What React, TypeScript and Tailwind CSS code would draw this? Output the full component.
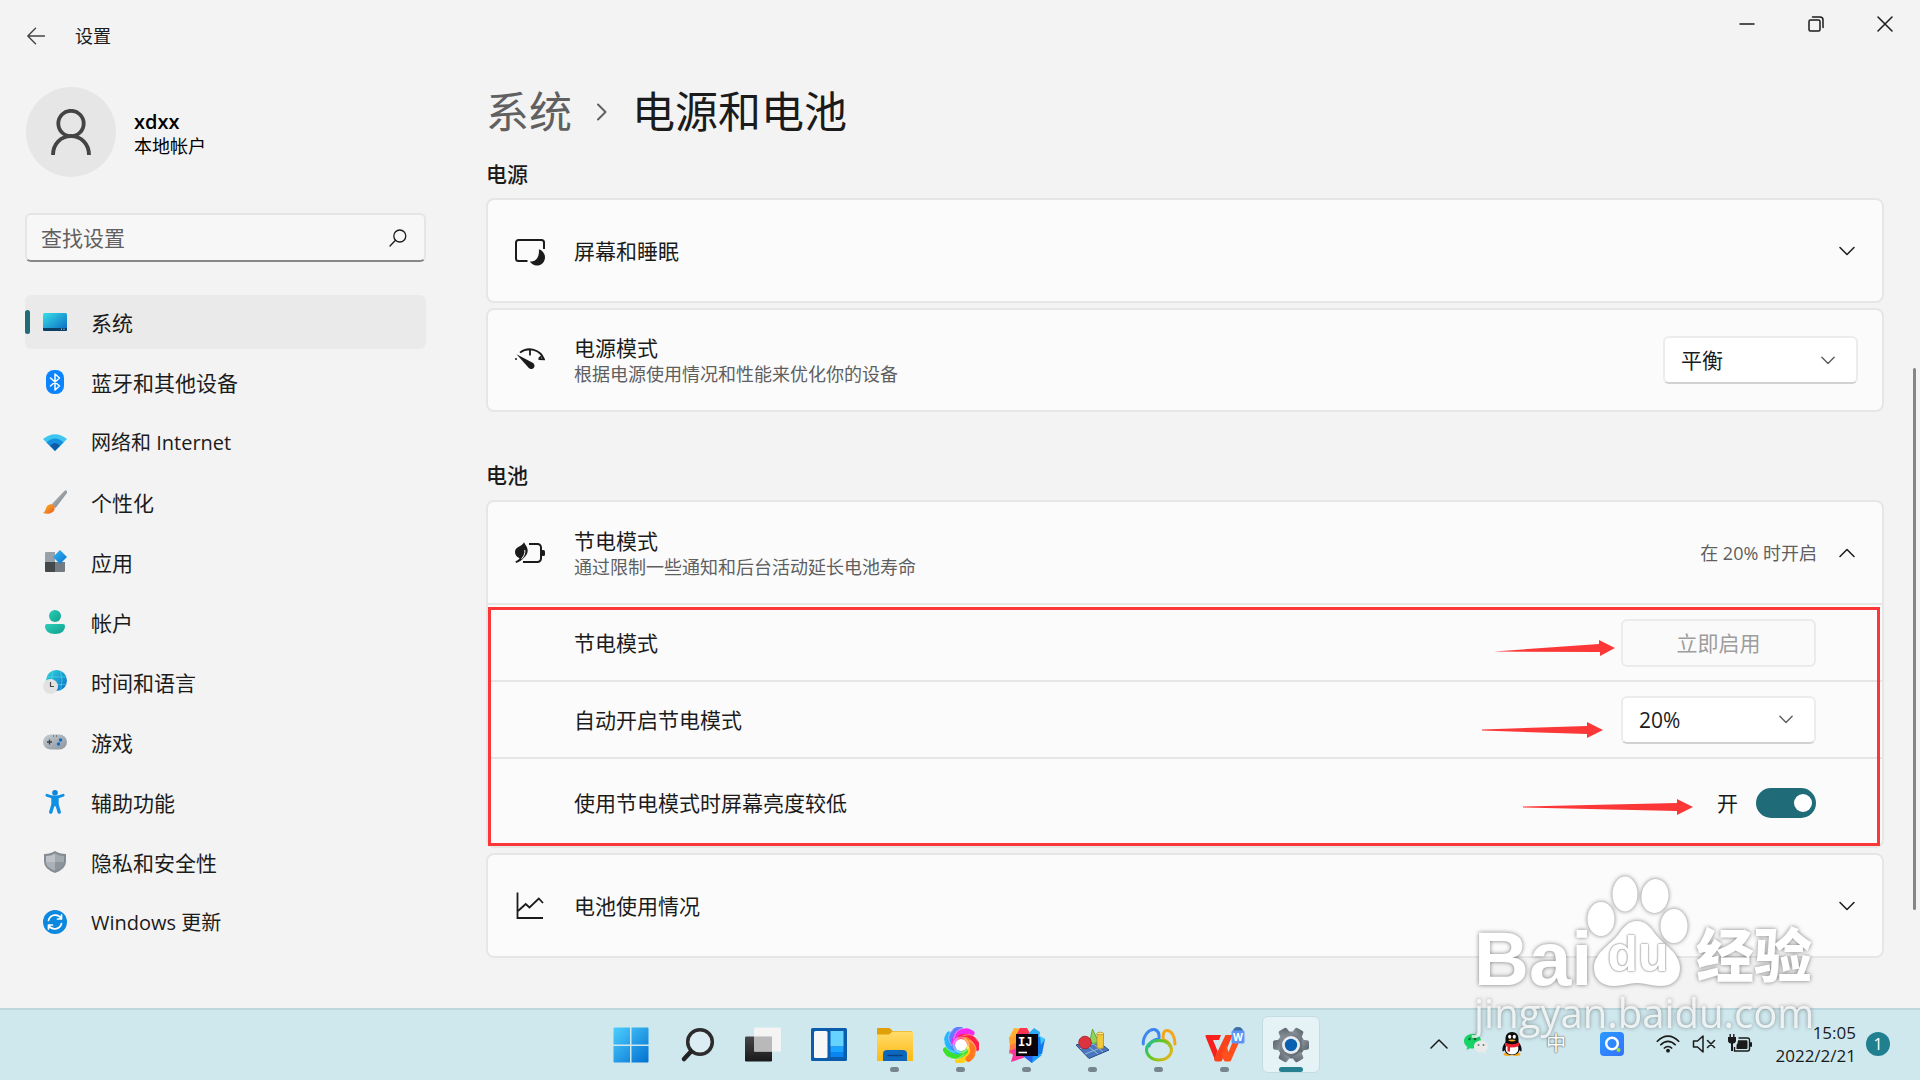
import React, { useState } from "react";

const line = { fill: "none", stroke: "currentColor", strokeLinecap: "round", strokeLinejoin: "round" } as const;

function Chevron({ up = false, small = false }: { up?: boolean; small?: boolean }) {
  return (
    <svg viewBox="0 0 16 10" className={small ? "w-3.5" : "w-4"} {...line} strokeWidth={small ? 1.6 : 1.5} aria-hidden="true">
      <path d={up ? "M1 8.5 8 1.5l7 7" : "M1 1.5l7 7 7-7"} />
    </svg>
  );
}

/* ---------- Sidebar icons ---------- */

const SystemIcon = () => (
  <svg viewBox="0 0 24 24" className="size-6" aria-hidden="true">
    <defs>
      <linearGradient id="sys" x1="0" y1="0" x2="1" y2="1">
        <stop offset="0" stopColor="#35e0e8" />
        <stop offset="1" stopColor="#0a66c2" />
      </linearGradient>
    </defs>
    <rect y="3" width="24" height="18" rx="1.5" fill="url(#sys)" />
    <path d="M0 18h24v1.500a1.500 1.500 0 0 1-1.500 1.500h-21A1.500 1.500 0 0 1 0 19.500z" fill="#0b3f66" />
    <path d="M18 19.200h1M20.500 19.200h1" stroke="#cfe8f5" />
  </svg>
);

const BluetoothIcon = () => (
  <svg viewBox="0 0 24 24" className="size-6" aria-hidden="true">
    <rect x="3" width="18" height="24" rx="8" fill="#0a84ff" />
    <path d="M7.500 8l9 8-4.500 4V4l4.500 4-9 8" fill="none" stroke="#fff" strokeWidth="1.500" strokeLinejoin="round" strokeLinecap="round" />
  </svg>
);

const WifiFanIcon = () => (
  <svg viewBox="0 0 24 24" className="size-6" aria-hidden="true">
    <path d="M0 9Q12-.5 24 9L12 21z" fill="#3cc5f1" />
    <path d="M3.500 12.500Q12 4.500 20.500 12.500L12 21z" fill="#1490df" />
    <path d="M7 15.500q5-5 10 0L12 20.800z" fill="#0f5aa6" />
  </svg>
);

const BrushIcon = () => (
  <svg viewBox="0 0 24 24" className="size-6" aria-hidden="true">
    <defs>
      <linearGradient id="brh" x1="0" y1="0" x2="1" y2="1">
        <stop offset="0" stopColor="#c3c9ce" />
        <stop offset="1" stopColor="#6b747b" />
      </linearGradient>
      <linearGradient id="brt" x1="0" y1="0" x2="1" y2="1">
        <stop offset="0" stopColor="#fbb62a" />
        <stop offset="1" stopColor="#ea5a1c" />
      </linearGradient>
    </defs>
    <path d="M8.500 14.500 21 1.200Q22.800-.3 23.700.8t.1 2.500L12.500 18z" fill="url(#brh)" />
    <path d="M11.500 19.500c-1 3.500-6 5.500-11.500 3.500 2.500-1.500 2-3 3.500-6 1.500-3.500 6-3.500 7.300-1.500q1.200 1.800.7 4z" fill="url(#brt)" />
  </svg>
);

const AppsIcon = () => (
  <svg viewBox="0 0 24 24" className="size-6" aria-hidden="true">
    <defs>
      <linearGradient id="app" x1="0" y1="0" x2="1" y2="1">
        <stop offset="0" stopColor="#35b8f5" />
        <stop offset="1" stopColor="#0a73cf" />
      </linearGradient>
    </defs>
    <path d="M3 2h9v10H2V3a1 1 0 0 1 1-1z" fill="#98a1a9" />
    <path d="M2 12h10v10H3a1 1 0 0 1-1-1z" fill="#43484b" />
    <path d="M12 12h10v9a1 1 0 0 1-1 1h-9z" fill="#747c83" />
    <path d="M17 0l7 7-7 7-7-7z" fill="url(#app)" />
  </svg>
);

const AccountIcon = () => (
  <svg viewBox="0 0 24 24" className="size-6" aria-hidden="true">
    <defs>
      <linearGradient id="acc" x1="0" y1="0" x2="1" y2="1">
        <stop offset="0" stopColor="#2ad0ba" />
        <stop offset="1" stopColor="#109e8a" />
      </linearGradient>
    </defs>
    <circle cx="12" cy="6" r="6" fill="url(#acc)" />
    <path d="M4 14h16a2 2 0 0 1 2 2c0 5-4 8-10 8S2 21 2 16a2 2 0 0 1 2-2z" fill="url(#acc)" />
  </svg>
);

const TimeIcon = () => (
  <svg viewBox="0 0 24 24" className="size-6" aria-hidden="true">
    <defs>
      <linearGradient id="tim" x1="0" y1="0" x2="1" y2="1">
        <stop offset="0" stopColor="#2fd6d8" />
        <stop offset="1" stopColor="#0a6cc8" />
      </linearGradient>
    </defs>
    <circle cx="13.500" cy="10.500" r="10.500" fill="url(#tim)" />
    <path d="M4 7h19M4 14.500h19M10 1q-3 9 0 20M17.500 1q3 9 0 20" fill="none" stroke="#5fe0ee" strokeWidth=".9" opacity=".6" />
    <circle cx="7.500" cy="16.500" r="7.500" fill="#e2e2e2" />
    <path d="M7.500 12v4.500h3.500" fill="none" stroke="#4b4b4b" strokeWidth="1.200" />
  </svg>
);

const GameIcon = () => (
  <svg viewBox="0 0 24 24" className="size-6" aria-hidden="true">
    <defs>
      <linearGradient id="gam" x1="0" y1="0" x2="1" y2="1">
        <stop offset="0" stopColor="#c6ccd1" />
        <stop offset="1" stopColor="#8b949c" />
      </linearGradient>
    </defs>
    <rect y="4.500" width="24" height="15" rx="7.500" fill="url(#gam)" />
    <path d="M6.500 9.500v5M4 12h5" stroke="#3b4045" strokeWidth="1.300" />
    <circle cx="17.500" cy="10" r="1.700" fill="#0a6cc8" />
    <circle cx="15.500" cy="14" r="1.700" fill="#0a6cc8" />
    <path d="M10 6h1M13 6h1" stroke="#3b4045" />
  </svg>
);

const AccessIcon = () => (
  <svg viewBox="0 0 24 24" className="size-6" aria-hidden="true">
    <g fill="none" stroke="#1090e4" strokeLinecap="round" strokeLinejoin="round">
      <path d="M3.800 5.300Q12 8.800 20.200 5.300" strokeWidth="2.800" />
      <path d="M10 8.500v6L7.800 22M14 8.500v6l2.200 7.500" strokeWidth="3.400" />
      <path d="M12 8.500v6" strokeWidth="4" />
    </g>
    <circle cx="12" cy="2.800" r="2.800" fill="#0f86dc" />
  </svg>
);

const ShieldIcon = () => (
  <svg viewBox="0 0 24 24" className="size-6" aria-hidden="true">
    <path d="M12 1q4.500 3 11 3v7.500Q23 19 12 23 1 19 1 11.500V4q6.500 0 11-3z" fill="#858c93" />
    <path d="M12 3.500Q8 6 3 6v6h9z" fill="#bcc2c7" />
    <path d="M12 3.500Q16 6 21 6v6h-9z" fill="#a3aab0" />
    <path d="M3 12h9v8.700Q3 17.500 3 12z" fill="#aab1b7" />
    <path d="M21 12h-9v8.700q9-3.200 9-8.700z" fill="#8d959c" />
  </svg>
);

const UpdateIcon = () => (
  <svg viewBox="0 0 24 24" className="size-6" aria-hidden="true">
    <circle cx="12" cy="12" r="12" fill="#0c88de" />
    <g fill="none" stroke="#fff" strokeWidth="1.700" strokeLinecap="round" strokeLinejoin="round">
      <path d="M5.500 10.500a7 7 0 0 1 12.800-2M18.500 5v4h-4" />
      <path d="M18.500 13.500a7 7 0 0 1-12.800 2M5.500 19v-4h4" />
    </g>
  </svg>
);

const NAV = [
  { label: "系统", Icon: SystemIcon },
  { label: "蓝牙和其他设备", Icon: BluetoothIcon },
  { label: "网络和 Internet", Icon: WifiFanIcon, latin: true },
  { label: "个性化", Icon: BrushIcon },
  { label: "应用", Icon: AppsIcon },
  { label: "帐户", Icon: AccountIcon },
  { label: "时间和语言", Icon: TimeIcon },
  { label: "游戏", Icon: GameIcon },
  { label: "辅助功能", Icon: AccessIcon },
  { label: "隐私和安全性", Icon: ShieldIcon },
  { label: "Windows 更新", Icon: UpdateIcon, latin: true },
];

/* ---------- Card icons ---------- */

const ScreenSleepIcon = () => (
  <svg viewBox="0 0 30 30" className="size-[30px] shrink-0" aria-hidden="true">
    <path d="M12.500 25H3.500A2.500 2.500 0 0 1 1 22.500v-16A2.500 2.500 0 0 1 3.500 4h23A2.500 2.500 0 0 1 29 6.500V13" fill="none" stroke="currentColor" strokeWidth="2" />
    <path d="M23.800 13.200c4 1.200 6.200 4.600 6.200 8 0 4.800-3.600 8.300-8.200 8.300-3 0-5.600-1.500-7-3.900 6.500.4 10-5.200 9-12.400z" fill="currentColor" />
  </svg>
);

const GaugeIcon = () => (
  <svg viewBox="0 0 30 30" className="size-[30px] shrink-0" aria-hidden="true">
    <path d="M5 7.600A15.500 15.500 0 0 1 29 14.300L23.500 14M15 4v6.500M27.500 10.800l-3.500 2.500" fill="none" stroke="currentColor" strokeWidth="1.800" />
    <path d="M1.500 9.200 17.700 17.800a3.300 3.300 0 1 1-3.900 5.200z" fill="currentColor" />
    <circle cx="1" cy="14" r="1" fill="currentColor" />
  </svg>
);

const BatterySaverIcon = () => (
  <svg viewBox="0 0 30 30" className="size-[30px] shrink-0" aria-hidden="true">
    <path d="M9 4.300c.8 2 3.200 4 3.600 7.200.5 4-1.800 6.500-4 8.500-1.900 1.800-3.600 4-7.600 5l-.6-1.700c2-.7 3.200-1.700 4.200-3C1.200 19 0 16.500 0 14 0 8.500 6.800 9 9 4.300z" fill="currentColor" />
    <path d="M9.800 12c.5 3.500-1 6.500-3.300 8.800" fill="none" stroke="#fbfbfb" strokeWidth="1" />
    <path d="M14 6h8.500A3.500 3.500 0 0 1 26 9.500v11a3.500 3.500 0 0 1-3.500 3.500H8" fill="none" stroke="currentColor" strokeWidth="2" />
    <rect x="26" y="12" width="4" height="6" rx="1.500" fill="currentColor" />
  </svg>
);

const ChartIcon = () => (
  <svg viewBox="0 0 30 30" className="size-[30px] shrink-0" fill="none" stroke="currentColor" strokeWidth="1.800" aria-hidden="true">
    <path d="M2.500 1.500V27H28" />
    <path d="M3 20l7.700-7 3.800 3.500 9.300-9L28 12" />
  </svg>
);

/* ---------- Taskbar icons ---------- */

const StartIcon = () => (
  <svg viewBox="0 0 36 36" className="size-9" aria-hidden="true">
    <defs>
      <linearGradient id="win" x1="0" y1="0" x2="36" y2="36" gradientUnits="userSpaceOnUse">
        <stop offset="0" stopColor="#4fd0ff" />
        <stop offset="1" stopColor="#006fd0" />
      </linearGradient>
    </defs>
    <path d="M1.500.5H17v17H.5v-16a1 1 0 0 1 1-1zM18.500.5h16a1 1 0 0 1 1 1v16h-17zM.5 19H17v16.500H1.500a1 1 0 0 1-1-1zM18.500 19h17v15.500a1 1 0 0 1-1 1h-16z" fill="url(#win)" />
  </svg>
);

const SearchTaskIcon = () => (
  <svg viewBox="0 0 36 36" className="size-9" aria-hidden="true">
    <circle cx="21" cy="15" r="12.300" fill="#dcecf3" stroke="#2c2c2c" strokeWidth="3.500" />
    <path d="M12 24.500 5 32" stroke="#222" strokeWidth="4.500" strokeLinecap="round" />
  </svg>
);

const TaskViewIcon = () => (
  <svg viewBox="0 0 36 36" className="size-9" aria-hidden="true">
    <defs>
      <linearGradient id="tv" x1="0" y1="0" x2="0" y2="1">
        <stop offset="0" stopColor="#464646" />
        <stop offset="1" stopColor="#1a1a1a" />
      </linearGradient>
    </defs>
    <rect y="9.500" width="27" height="25" rx="1.200" fill="url(#tv)" />
    <rect x="9" y=".5" width="27" height="24" rx="1.200" fill="#f4f4f4" />
    <path d="M9 9.500h18v15H9z" fill="#b9b9b9" />
  </svg>
);

const WidgetsIcon = () => (
  <svg viewBox="0 0 36 36" className="size-9" aria-hidden="true">
    <rect y="1" width="36" height="33" rx="1.500" fill="#0b5cad" />
    <rect x="3" y="4" width="13.500" height="27" rx="1.500" fill="#f7f7f7" />
    <path d="M19.500 4h13v15.500h-13z" fill="#66d3ff" />
    <path d="M19.500 19.500h13V25h-13z" fill="#1aa3ff" />
    <path d="M19.500 25h13v5h-13z" fill="#0a84f0" />
  </svg>
);

const FolderIcon = () => (
  <svg viewBox="0 0 36 36" className="size-9" aria-hidden="true">
    <defs>
      <linearGradient id="fol" x1="0" y1="0" x2="0" y2="1">
        <stop offset="0" stopColor="#ffdc6b" />
        <stop offset="1" stopColor="#fdb913" />
      </linearGradient>
    </defs>
    <path d="M0 2a1 1 0 0 1 1-1h10.500q1.500 0 2.500 1.300L15.500 4H35v6H0z" fill="#dfa00a" />
    <path d="M0 7.500h12l3.500-3H35a1 1 0 0 1 1 1V34H0z" fill="url(#fol)" />
    <path d="M6 34v-7q0-4 4-4h16q4 0 4 4v7z" fill="#0d68bd" />
    <path d="M11 28.500h14" stroke="#0a3f80" strokeWidth="1.500" strokeLinecap="round" />
  </svg>
);

const SWIRL: [string, number][] = [
  ["#ffd21a", 120],
  ["#3be02a", 180],
  ["#1fb8ff", 240],
  ["#5f7bff", 285],
  ["#f22af0", 330],
  ["#ff1f4a", 30],
  ["#ff7a1f", 80],
];

const SwirlIcon = () => (
  <svg viewBox="-18 -18 36 36" className="size-9" fill="none" strokeLinecap="round" aria-hidden="true">
    {SWIRL.map(([c, a]) => (
      <g key={a} transform={`rotate(${a})`}>
        <path d="M-4-6C2-13 11-13 15-5" stroke={c} strokeWidth="6" />
        <path d="M-3-9C2-15 8-15.500 12-12" stroke="#fff" strokeWidth="1.200" opacity=".35" />
      </g>
    ))}
    <circle r="6" fill="#fff" />
    <circle r="7.500" stroke="#fff" strokeWidth="2" opacity=".4" />
  </svg>
);

const IntelliJIcon = () => (
  <svg viewBox="0 0 36 36" className="size-9" aria-hidden="true">
    <path d="M5 1l9 1-4 9-8 4-2-4z" fill="#ffb02e" />
    <path d="M11 1h7l4 7-8 10-9-6z" fill="#fb3250" />
    <path d="M0 11l8-3v10l-7 2z" fill="#ffa02d" />
    <path d="M1 18l9-3v9l-10 3z" fill="#ff7a3d" />
    <path d="M0 24l10-4 8 9-4 2-12 4 2-7z" fill="#f8339b" />
    <path d="M19 7l6-6 6 4-1 8z" fill="#2fa8f5" />
    <path d="M25 8l11 4-3 15-7 2z" fill="#1279ea" />
    <path d="M31 9l5 3-4 6z" fill="#3fc8ff" />
    <path d="M14 29l13-3 6 2-10 8z" fill="#18a0f8" />
    <path d="M14 29l9 7 1-8z" fill="#2d62e8" />
    <rect x="7" y="7" width="22" height="22" fill="#0a0208" />
    <text x="9" y="18.500" fontSize="12" fontWeight="700" fontFamily="Liberation Mono, monospace" fill="#fff">
      IJ
    </text>
    <path d="M9.500 25.500h8.500" stroke="#fff" strokeWidth="1.600" />
  </svg>
);

const ShapesIcon = () => (
  <svg viewBox="0 0 36 36" className="size-9" aria-hidden="true">
    <path d="M1 18 20 12l14 11-20 8.500z" fill="#4a78bd" stroke="#274a85" />
    <path d="M5 21.500l19-6.500M10 27l19-7.500M10 17l13 10M16 15l12 10" stroke="#a9c6ec" strokeWidth=".8" />
    <path d="M17.500 2l6 13q-5 3-9 0z" fill="#8fd45a" stroke="#4a9a28" strokeWidth=".8" />
    <circle cx="10" cy="15.500" r="6.300" fill="#dc3340" stroke="#a31d28" strokeWidth=".8" />
    <path d="M22 6.500v14q3.500 2.500 6.500 0v-14z" fill="#f3c83a" stroke="#b98a14" strokeWidth=".8" />
    <ellipse cx="25.250" cy="6.500" rx="3.250" ry="1.300" fill="#ffe88a" stroke="#b98a14" strokeWidth=".8" />
  </svg>
);

const NavicatIcon = () => (
  <svg viewBox="0 0 36 36" className="size-9" fill="none" strokeWidth="3" strokeLinejoin="round" strokeLinecap="round" aria-hidden="true">
    <defs>
      <linearGradient id="nvc" x1="0" y1="0" x2="1" y2="0.600">
        <stop offset="0" stopColor="#17bfa0" />
        <stop offset=".5" stopColor="#5fc81f" />
        <stop offset="1" stopColor="#d9b81a" />
      </linearGradient>
    </defs>
    <path d="M2.200 17C2 9 8 1.500 13.500 2.500c4 1 5 5 4.500 9.500-5.500.5-8.500 2.500-10 7" stroke="#3f86f0" />
    <path d="M22.500 13c-1-5 0-9 3-9.500 5-.5 8.500 6 8.500 13.500M22.500 13c3.500 1 5.500 2.500 6.500 6" stroke="#f5a51c" />
    <path d="M18 13.500C10.500 13.500 5.500 17.500 5.500 23S11 33 18 33s12.500-4.500 12.500-10S25.500 13.500 18 13.500z" stroke="url(#nvc)" />
  </svg>
);

const WpsIcon = () => (
  <svg viewBox="0 0 40 38" className="h-[38px] w-10" aria-hidden="true">
    <path d="M.5 10.500Q0 9 1.500 9H16l-2 5H8l4.500 11L10 34z" fill="#f8201c" />
    <path d="M20.500 9h7L17 34.500q-.5 1-1.500 1H11q-1 0-1.500-1l-.5-1.500z" fill="#f9421c" />
    <path d="M16.500 29.500 21 18l2.500 8L28 15h6.500L26 34.500q-.5 1-1.500 1h-4q-1 0-1.500-1z" fill="#ff4f1c" />
    <path d="M27.500 6.500Q28 1 33 1q5 0 5.500 5.500V14h-11z" fill="#3c6fa8" />
    <rect x="26.500" y="4.500" width="13" height="13" rx="1.500" fill="#5c94f7" />
    <text x="33" y="15" textAnchor="middle" fontSize="10" fontWeight="700" fontFamily="Inter, sans-serif" fill="#fff">
      W
    </text>
  </svg>
);

const GearIcon = () => (
  <svg viewBox="-18 -18 36 36" className="size-9" aria-hidden="true">
    <defs>
      <linearGradient id="gea" x1="0" y1="0" x2="1" y2="1">
        <stop offset="0" stopColor="#8d969d" />
        <stop offset="1" stopColor="#59626a" />
      </linearGradient>
    </defs>
    <g fill="url(#gea)">
      <circle r="13.500" />
      {[0, 60, 120, 180, 240, 300].map((a) => (
        <path key={a} d="M11-5.500 17-4.500Q18-4 18-2.500v5Q18 4 17 4.500L11 5.500z" transform={`rotate(${a})`} />
      ))}
    </g>
    <circle r="9" fill="#e9edf0" />
    <circle r="6.200" fill="#0b61b0" />
  </svg>
);

const APPS = [
  { label: "开始", Icon: StartIcon },
  { label: "搜索", Icon: SearchTaskIcon },
  { label: "任务视图", Icon: TaskViewIcon },
  { label: "小组件", Icon: WidgetsIcon },
  { label: "文件资源管理器", Icon: FolderIcon, open: true },
  { label: "浏览器", Icon: SwirlIcon, open: true },
  { label: "IntelliJ IDEA", Icon: IntelliJIcon, open: true },
  { label: "几何画板", Icon: ShapesIcon, open: true },
  { label: "Navicat", Icon: NavicatIcon, open: true },
  { label: "WPS", Icon: WpsIcon, open: true },
  { label: "设置", Icon: GearIcon, open: true, active: true },
];

function Taskbar() {
  return (
    <footer className="grid h-[72px] grid-cols-[1fr_auto_1fr] border-t-2 border-[#bcd7dd] bg-[#cfe8ee]">
      <div />
      <div className="flex gap-2 pt-1.5 pl-px">
        {APPS.map(({ label, Icon, open, active }) => (
          <button
            key={label}
            aria-label={label}
            className={`relative flex h-[57px] w-[58px] items-center justify-center rounded-md border ${
              active ? "border-[#c6dbe1] bg-[#e5f2f6]" : "border-transparent"
            }`}
          >
            <Icon />
            {open && (
              <span
                className={
                  active
                    ? "absolute bottom-0 h-[5px] w-6 rounded-full bg-[#26808f]"
                    : "absolute bottom-0 h-[5px] w-[9px] rounded-full bg-[#76868c]"
                }
              />
            )}
          </button>
        ))}
      </div>
      <div className="flex items-center justify-end pr-[30px] pb-0.5 text-[#1a1a1a]">
        <button aria-label="显示隐藏的图标" className="mr-4">
          <svg viewBox="0 0 18 10" className="w-[18px]" {...line} strokeWidth="1.500">
            <path d="M1 9l8-8 8 8" />
          </svg>
        </button>
        <button aria-label="微信" className="mr-3.5">
          <svg viewBox="0 0 24 24" className="size-6">
            <path d="M8.500 2C3.500 2 0 5 0 9c0 2.500 1.300 4.500 3.300 5.800L2.500 18l3.500-1.800q1.200.3 2.500.3C13.500 16.500 17 13 17 9s-3.500-7-8.500-7z" fill="#17d466" />
            <circle cx="5.500" cy="7" r="1.200" fill="#0c6b36" />
            <circle cx="11" cy="7" r="1.200" fill="#0c6b36" />
            <path d="M17 8.500c-4 0-7 2.500-7 6s3 6 7 6q1 0 2-.3l2.700 1.400-.5-2.500C23 18 24 16.500 24 14.500c0-3.500-3-6-7-6z" fill="#e9ebeb" />
            <circle cx="14.500" cy="13" r="1" fill="#777" />
            <circle cx="19.500" cy="13" r="1" fill="#777" />
          </svg>
        </button>
        <button aria-label="QQ" className="mr-6">
          <svg viewBox="0 0 20 24" className="h-6 w-5">
            <ellipse cx="6" cy="22.300" rx="4.500" ry="1.700" fill="#f7a81b" />
            <ellipse cx="14" cy="22.300" rx="4.500" ry="1.700" fill="#f7a81b" />
            <path d="M10 0c4.500 0 6.500 3 6.500 7v3C19 13 20 16 19.500 19c-.5 1-1.500 0-2-1-.5 3-3.500 5-7.500 5s-7-2-7.500-5c-.5 1-1.500 2-2 1C0 16 1 13 3.500 10V7c0-4 2-7 6.500-7z" fill="#0c0c0c" />
            <path d="M4.500 13h11q1.500 3 .5 6-2 3.500-6 3.500T4 19q-1-3 .5-6z" fill="#fff" />
            <path d="M3 10.500q7 3.500 14 0v3.500q-5 2-9 1.500v4H5.500v-5L3 14z" fill="#e8202e" />
            <ellipse cx="7.700" cy="4.800" rx="1.600" ry="2" fill="#fff" />
            <ellipse cx="12.300" cy="4.800" rx="1.600" ry="2" fill="#fff" />
            <path d="M6 8.300q4-1.500 8 0-4 2.500-8 0z" fill="#f7a81b" />
          </svg>
        </button>
        <button className="mr-[34px] text-xl leading-6 text-white [text-shadow:0_0_1px_#555,0_0_2px_#555]">中</button>
        <button aria-label="QQ浏览器" className="mr-8">
          <svg viewBox="0 0 24 24" className="size-6">
            <defs>
              <linearGradient id="qb" x1="0" y1="0" x2="1" y2="1">
                <stop offset="0" stopColor="#2a9bff" />
                <stop offset="1" stopColor="#3470ff" />
              </linearGradient>
            </defs>
            <rect width="24" height="24" rx="4" fill="url(#qb)" />
            <circle cx="12" cy="11.500" r="5.800" fill="none" stroke="#fff" strokeWidth="2.400" />
            <circle cx="18.500" cy="18" r="2" fill="#9be22c" />
          </svg>
        </button>
        <button aria-label="网络、音量和电池" className="mr-6 flex items-center gap-3">
          <svg viewBox="0 0 24 18" className="h-[18px] w-6" fill="none" stroke="currentColor" strokeWidth="1.600">
            <path d="M.8 6.800Q12-4.500 23.200 6.800M4.300 10.200q7.700-7.500 15.400 0M7.800 13.500q4.200-4 8.400 0" />
            <circle cx="12" cy="15.700" r="1.900" fill="currentColor" stroke="none" />
          </svg>
          <svg viewBox="0 0 24 18" className="h-[18px] w-6" {...line} strokeWidth="1.500">
            <path d="M1.500 6h4L11 1v16l-5.500-5h-4zM15.500 5.500l7 7M22.500 5.500l-7 7" />
          </svg>
          <svg viewBox="0 0 24 20" className="h-5 w-6">
            <path d="M10.500 4h9a2 2 0 0 1 2 2v9a2 2 0 0 1-2 2H6.500v-4" fill="none" stroke="currentColor" strokeWidth="1.400" />
            <path d="M10 6.300h8.500q1 0 1 1V14q0 1-1 1h-10v-4q1.500-1.500 1.500-4.700z" fill="currentColor" />
            <rect x="22" y="8" width="2" height="5" rx="1" fill="currentColor" />
            <path d="M1.500 0h1.400v3h2.200V0h1.400v3H8v3.500Q8 9 5 9.500V17H3V9.500Q0 9 0 6.500V3h1.500z" fill="currentColor" />
          </svg>
        </button>
        <button className="mr-2.5 w-20 text-right text-[17px] leading-[23px] whitespace-nowrap">
          <span className="flex flex-col items-end">
            <span>15:05</span>
            <span>2022/2/21</span>
          </span>
        </button>
        <button aria-label="1 条通知" className="size-6 rounded-full bg-[#21808f] text-base leading-6 text-white">
          1
        </button>
      </div>
    </footer>
  );
}

function Watermark() {
  return (
    <div
      aria-hidden="true"
      className="pointer-events-none absolute right-[104px] bottom-[45px] flex w-[342px] flex-col text-white drop-shadow-[0_0_2px_rgba(0,0,0,0.5)]"
    >
      <div className="flex items-end justify-between pr-1">
        <span className="font-['Liberation_Sans',sans-serif] text-[76px] leading-[64px] font-bold">Bai</span>
        <span className="relative mb-1 -ml-3 h-28 w-[104px]">
          <svg viewBox="0 0 104 112" className="h-28 w-[104px]" fill="currentColor">
            <ellipse cx="15" cy="44" rx="13.500" ry="17" />
            <ellipse cx="39" cy="19" rx="12.500" ry="17.500" />
            <ellipse cx="69" cy="21" rx="13.500" ry="17" transform="rotate(8 69 21)" />
            <ellipse cx="88" cy="51" rx="13.500" ry="17" />
            <path d="M51 46c9 0 14 7 19 14 8 10 24 18 24 33 0 12-8 18-20 18-9 0-15-3-23-3s-13 3-23 3c-12 0-20-7-20-18 0-15 16-23 24-33 5-7 10-14 19-14z" />
          </svg>
          <span className="absolute inset-x-0 bottom-2 text-center font-['Liberation_Sans',sans-serif] text-[50px] leading-[50px] font-bold text-white [text-shadow:0_0_2px_#888,0_0_2px_#888]">
            du
          </span>
        </span>
        <span className="text-[58px] leading-[72px] font-black">经验</span>
      </div>
      <span className="text-[40px] leading-[44px] opacity-80">jingyan.baidu.com</span>
    </div>
  );
}

const selectClass =
  "h-12 w-full appearance-none rounded-md border-2 border-[#ececec] border-b-[#d2d2d2] bg-white pr-12 pl-4 text-[21px] leading-7 outline-none";

function Dropdown({ label, options }: { label: string; options: string[] }) {
  return (
    <div className="relative w-[195px] shrink-0">
      <select aria-label={label} defaultValue={options[0]} className={selectClass}>
        {options.map((o) => (
          <option key={o}>{o}</option>
        ))}
      </select>
      <span className="pointer-events-none absolute inset-y-0 right-[23px] flex items-center text-[#5c5c5c]">
        <Chevron small />
      </span>
    </div>
  );
}

const cardClass = "rounded-lg border-2 border-[#e6e6e6] bg-[#fbfbfb]";
const headClass = "flex min-h-[101px] w-full items-center gap-[29px] px-[27px] text-left";

function RowText({ title, detail }: { title: string; detail?: string }) {
  return (
    <span className="flex flex-1 flex-col">
      <span className="text-[21px] leading-7">{title}</span>
      {detail && <span className="text-lg leading-6 text-[#5f5f5f]">{detail}</span>}
    </span>
  );
}

function Pointer({ shape, className }: { shape: string; className: string }) {
  return (
    <svg viewBox="0 0 170 16" className={`pointer-events-none absolute h-4 w-[170px] ${className}`} aria-hidden="true">
      <path d={shape} fill="#fb3737" />
    </svg>
  );
}

export default function App() {
  const [dim, setDim] = useState(true);
  return (
    <div className="relative flex min-h-screen flex-col bg-[#f3f3f3] font-['Open_Sans','Noto_Sans_CJK_SC',sans-serif] text-[#1b1b1b]">
      <header className="flex h-[72px] items-start justify-between">
        <div className="flex h-full items-center pl-[27px]">
          <button aria-label="返回" className="text-[#444]">
            <svg viewBox="0 0 18 18" className="size-[18px]" {...line} strokeWidth="1.400">
              <path d="M17.500 9H.8M8.500 1.200.8 9l7.700 7.800" />
            </svg>
          </button>
          <span className="pl-[30px] text-lg leading-6">设置</span>
        </div>
        <div className="flex pr-px">
          <button aria-label="最小化" className="flex h-[47px] w-[69px] items-center justify-center">
            <svg viewBox="0 0 16 16" className="size-4" {...line} strokeWidth="1.500">
              <path d="M1 8h14" />
            </svg>
          </button>
          <button aria-label="还原" className="flex h-[47px] w-[69px] items-center justify-center">
            <svg viewBox="0 0 16 16" className="size-4" {...line} strokeWidth="1.500">
              <rect x="1" y="4" width="11" height="11" rx="1.500" />
              <path d="M4.500 1H12a3 3 0 0 1 3 3v7.500" />
            </svg>
          </button>
          <button aria-label="关闭" className="flex h-[47px] w-[69px] items-center justify-center">
            <svg viewBox="0 0 16 16" className="size-4" {...line} strokeWidth="1.500">
              <path d="M1 1l14 14M15 1 1 15" />
            </svg>
          </button>
        </div>
      </header>

      <div className="flex flex-1 gap-[60px] pr-9 pl-[25px]">
        <aside className="w-[401px] shrink-0 pt-[15px]">
          <div className="flex items-center gap-[18px] pl-px">
            <div className="flex size-[90px] items-center justify-center rounded-full bg-[#e6e6e6] text-[#444]">
              <svg viewBox="0 0 40 46" className="h-[46px] w-10" fill="none" stroke="currentColor" strokeWidth="3.800" aria-hidden="true">
                <circle cx="20" cy="14.500" r="12.700" />
                <path d="M2 46C2 34.500 10 27.200 20 27.200S38 34.500 38 46" />
              </svg>
            </div>
            <div className="pt-0.5 text-black">
              <p className="text-xl leading-[25px] font-semibold">xdxx</p>
              <p className="text-lg leading-6">本地帐户</p>
            </div>
          </div>

          <div className="relative mt-9">
            <input
              type="text"
              aria-label="查找设置"
              placeholder="查找设置"
              className="block h-[49px] w-full rounded-md border-2 border-[#e5e5e5] border-b-[#868686] bg-[#f7f7f7] pr-12 pl-3.5 text-[21px] outline-none placeholder:text-[#606060]"
            />
            <span className="pointer-events-none absolute inset-y-0 right-[19px] flex items-center">
              <svg viewBox="0 0 18 18" className="size-[18px]" {...line} strokeWidth="1.300" aria-hidden="true">
                <circle cx="10.800" cy="7" r="6" />
                <path d="M6.500 11.300 1 17" />
              </svg>
            </span>
          </div>

          <nav className="mt-[33px] flex flex-col gap-1.5">
            {NAV.map(({ label, Icon, latin }, i) => (
              <a
                key={label}
                href="#"
                aria-current={i === 0 ? "page" : undefined}
                className={`relative flex h-[54px] items-center gap-6 rounded-md pl-[18px] leading-7 ${
                  latin ? "text-xl" : "text-[21px]"
                } ${i === 0 ? "bg-[#eaeaea]" : ""}`}
              >
                {i === 0 && <span className="absolute left-0 h-6 w-[5px] rounded-full bg-[#1f6b78]" />}
                <Icon />
                <span className="pt-px">{label}</span>
              </a>
            ))}
          </nav>
        </aside>

        <main className="min-w-0 flex-1 pt-3 pb-[50px]">
          <h1 className="flex items-center text-[43px] leading-[56px]">
            <a href="#" className="text-[#606060]">系统</a>
            <svg viewBox="0 0 12 18" className="mx-6 h-[18px] w-3 text-[#606060]" {...line} strokeWidth="2" aria-hidden="true">
              <path d="M2 1.500 9.500 9 2 16.500" />
            </svg>
            <span>电源和电池</span>
          </h1>

          <h2 className="mt-[19px] mb-[9px] text-[21px] leading-[30px] font-medium">电源</h2>
          <div className="flex flex-col gap-[5px]">
            <div className={cardClass}>
              <button className={headClass}>
                <ScreenSleepIcon />
                <RowText title="屏幕和睡眠" />
                <Chevron />
              </button>
            </div>
            <div className={cardClass}>
              <div className="flex h-[100px] items-center gap-[29px] pr-6 pl-[27px]">
                <GaugeIcon />
                <RowText title="电源模式" detail="根据电源使用情况和性能来优化你的设备" />
                <Dropdown label="电源模式" options={["平衡", "最佳能效", "最佳性能"]} />
              </div>
            </div>
          </div>

          <h2 className="mt-12 mb-2.5 text-[21px] leading-[30px] font-medium">电池</h2>
          <div className="flex flex-col gap-[5px]">
            <div className={cardClass}>
              <button className={headClass}>
                <BatterySaverIcon />
                <RowText title="节电模式" detail="通过限制一些通知和后台活动延长电池寿命" />
                <span className="flex items-center gap-[22px]">
                  <span className="text-lg leading-6 text-[#5f5f5f]">在 20% 时开启</span>
                  <Chevron up />
                </span>
              </button>
              <div className="relative">
                <div className="relative flex h-[77px] items-center border-t-2 border-[#e6e6e6] pr-[66px] pl-[86px]">
                  <RowText title="节电模式" />
                  <Pointer className="top-[35px] right-[267px]" shape="M49 11.500 154 4V0l16 8-15 8v-4z" />
                  <button disabled className="h-12 w-[195px] rounded-md border-2 border-[#ebebeb] bg-[#fafafa] text-[21px] leading-7 text-[#9d9d9d]">
                    立即启用
                  </button>
                </div>
                <div className="relative flex h-[77px] items-center border-t-2 border-[#e6e6e6] pr-[66px] pl-[86px]">
                  <RowText title="自动开启节电模式" />
                  <Pointer className="top-[40px] right-[279px]" shape="M49 7.500 154 4V0l16 8-16 8v-4L49 8.500z" />
                  <Dropdown label="自动开启节电模式" options={["20%", "30%", "40%", "50%"]} />
                </div>
                <div className="relative flex h-[89px] items-center border-t-2 border-[#e6e6e6] pr-[66px] pl-[86px]">
                  <RowText title="使用节电模式时屏幕亮度较低" />
                  <Pointer className="top-[40px] right-[189px]" shape="M0 7.500 154 4V0l16 8-16 8v-4L0 8.500z" />
                  <label className="flex items-center gap-[18px] text-[21px] leading-7">
                    {dim ? "开" : "关"}
                    <input
                      type="checkbox"
                      role="switch"
                      aria-label="使用节电模式时屏幕亮度较低"
                      checked={dim}
                      onChange={(e) => setDim(e.target.checked)}
                      className="flex h-[30px] w-[60px] appearance-none items-center justify-start rounded-full bg-[#8a8a8a] px-1 before:size-[18px] before:rounded-full before:bg-white checked:justify-end checked:bg-[#1f6b78]"
                    />
                  </label>
                </div>
                <div className="pointer-events-none absolute inset-x-0 top-1 bottom-0 mr-0.5 border-[3px] border-[#fb3737]" />
              </div>
            </div>
            <div className={cardClass}>
              <button className={headClass}>
                <ChartIcon />
                <RowText title="电池使用情况" />
                <Chevron />
              </button>
            </div>
          </div>
        </main>
      </div>

      <div className="absolute top-[368px] right-1 h-[542px] w-[3px] rounded-full bg-[#868686]" />
      <Taskbar />
      <Watermark />
    </div>
  );
}
